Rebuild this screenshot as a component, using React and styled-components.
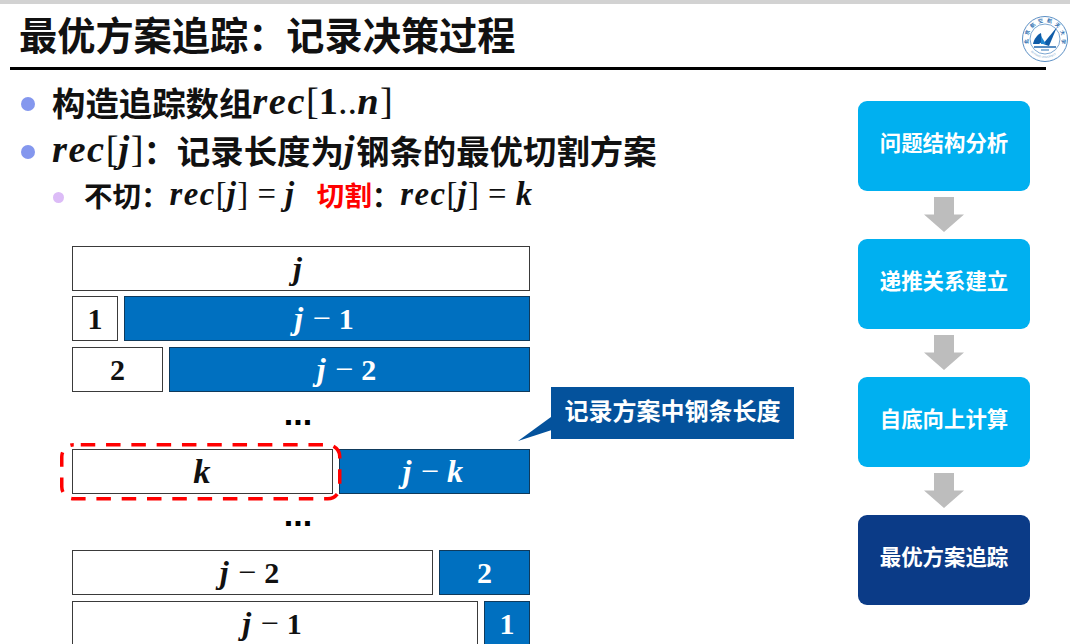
import React from "react";
import styled, { createGlobalStyle } from "styled-components";

const GlobalStyle = createGlobalStyle`
    html, body {
        margin: 0;
        padding: 0;
        background: #ffffff;
    }
    body {
        font-family: "Noto Sans CJK SC", "Liberation Sans", sans-serif;
    }
`;

const Page = styled.div`
    position: relative;
    width: 1070px;
    height: 644px;
    overflow: hidden;
    background: #ffffff;
`;

const TopStrip = styled.div`
    height: 4px;
    background: #d2d2d2;
`;

const Header = styled.div`
    height: 63px;
    padding-left: 19px;
    padding-bottom: 4px;
    box-sizing: border-box;
    display: flex;
    align-items: center;
    font-size: 38.2px;
    font-weight: 700;
    color: #111111;
`;

const Rule = styled.div`
    height: 3px;
    width: 1036px;
    margin-left: 10px;
    background: #000000;
`;

const Main = styled.div`
    display: flex;
    height: 574px;
`;

const LeftColumn = styled.div`
    width: 858px;
    flex: none;
`;

const BulletList = styled.div`
    height: 176px;
    padding-left: 21px;
    box-sizing: border-box;
    padding-top: 7px;
`;

const Line = styled.div`
    display: flex;
    align-items: center;
    height: ${(p) => (p.$sub ? "42px" : "48px")};
    margin-left: ${(p) => (p.$sub ? "32px" : "0")};
    font-size: ${(p) => (p.$sub ? "28.5px" : "33.4px")};
    font-weight: 700;
    color: #111111;
    white-space: pre;
`;

const Dot = styled.span`
    flex: none;
    width: ${(p) => (p.$sub ? "11px" : "14px")};
    height: ${(p) => (p.$sub ? "11px" : "14px")};
    margin-top: 6px;
    margin-right: ${(p) => (p.$sub ? "20px" : "17px")};
    border-radius: 50%;
    background: ${(p) => (p.$sub ? "#dcbcf7" : "#8497ee")};
`;

const Red = styled.span`
    color: #ff0000;
    margin-left: 21px;
    font-size: 27.5px;
`;

const M = styled.span`
    font-family: "Liberation Serif", "DejaVu Serif", serif;
    font-style: italic;
    font-weight: 700;
    font-size: 1.15em;
    letter-spacing: ${(p) => (p.$wide ? "0.045em" : "0.04em")};
`;

const Upright = styled.span`
    font-family: "Liberation Serif", "DejaVu Serif", serif;
    font-weight: ${(p) => (p.$light ? 400 : 700)};
    font-size: 1.15em;
`;

const Equals = styled.span`
    font-family: "Liberation Serif", "DejaVu Serif", serif;
    font-weight: 400;
    font-size: 1.15em;
    padding: 0 1px;
`;

const Bars = styled.div`
    position: relative;
    width: 458px;
    margin-left: 72px;
`;

const BarRow = styled.div`
    display: flex;
    gap: 6px;
    height: 45px;
    margin-bottom: ${(p) => p.$gap || 6}px;
`;

const Bar = styled.div`
    box-sizing: border-box;
    display: flex;
    align-items: center;
    justify-content: center;
    flex: ${(p) => (p.$w ? `0 0 ${p.$w}px` : "1 1 0")};
    border: 1px solid ${(p) => (p.$fill ? "#0f3a5c" : "#3a3a3a")};
    background: ${(p) => (p.$fill ? "#0070c0" : "#ffffff")};
    color: ${(p) => (p.$fill ? "#ffffff" : "#111111")};
    font-family: "Liberation Serif", "DejaVu Serif", serif;
    font-size: 30px;
    font-weight: 700;
    white-space: pre;
`;

const Expr = styled.span`
    display: flex;
    align-items: center;
    margin-right: ${(p) => p.$shift ?? 6}px;
    font-size: 28px;
`;

const Digit = styled.span`
    font-size: 30px;
`;

const Dots = styled.div`
    height: 51px;
    padding-right: 6px;
    box-sizing: border-box;
    text-align: center;
    font-family: "Liberation Sans", sans-serif;
    font-size: 34px;
    font-weight: 700;
    line-height: 30px;
    color: #000000;
`;

const HighlightBox = styled.svg`
    position: absolute;
    left: -12px;
    top: 197px;
    width: 282px;
    height: 58px;
`;

const Highlight = () => (
    <HighlightBox viewBox="0 0 282 58">
        <rect
            x="1.75"
            y="1.75"
            width="278"
            height="54"
            rx="12"
            fill="none"
            stroke="#ff0000"
            strokeWidth="3.5"
            strokeDasharray="14.5 10.8"
            strokeDashoffset="18.3"
        />
    </HighlightBox>
);

const Callout = styled.div`
    position: absolute;
    left: 551px;
    top: 387px;
    width: 243px;
    height: 52px;
    padding-bottom: 8px;
    box-sizing: border-box;
    display: flex;
    align-items: center;
    justify-content: center;
    background: #04529c;
    color: #ffffff;
    font-size: 24px;
    font-weight: 700;
    &::before {
        content: "";
        position: absolute;
        left: -33px;
        top: 30px;
        width: 33px;
        height: 24px;
        background: #04529c;
        clip-path: polygon(100% 0, 100% 55%, 0 100%);
    }
`;

const FlowColumn = styled.div`
    width: 172px;
    flex: none;
    padding-top: 31px;
    display: flex;
    flex-direction: column;
    align-items: center;
`;

const FlowBox = styled.div`
    width: 172px;
    height: 90px;
    flex: none;
    padding-bottom: 10px;
    box-sizing: border-box;
    display: flex;
    align-items: center;
    justify-content: center;
    border-radius: 9px;
    background: ${(p) => (p.$dark ? "#0b3b87" : "#00b0f0")};
    color: #ffffff;
    font-size: 21.4px;
    font-weight: 700;
`;

const FlowArrow = styled.div`
    width: 40px;
    height: 35px;
    margin: 6px 0 7px;
    background: #bdbdbd;
    clip-path: polygon(25% 0, 75% 0, 75% 50%, 100% 50%, 50% 100%, 0 50%, 25% 50%);
`;

const LogoWrap = styled.div`
    position: absolute;
    left: 1021px;
    top: 15px;
    width: 48px;
    height: 48px;
`;

const RING = "北京航空航天大学".split("");

const Logo = () => (
    <LogoWrap>
        <svg width="48" height="48" viewBox="0 0 48 48">
            <defs>
                <path id="logoRingLow" d="M6 30a19 19 0 0 0 36 0" />
            </defs>
            <circle cx="24" cy="24" r="22.5" fill="#fff" stroke="#5b8fc4" strokeWidth="1" />
            <circle cx="24" cy="24" r="15" fill="#fff" stroke="#5b8fc4" strokeWidth="0.8" />
            {RING.map((ch, i) => (
                <text
                    key={i}
                    x="24"
                    y="7.2"
                    fontSize="5"
                    fontWeight="700"
                    fill="#2c6fb0"
                    textAnchor="middle"
                    transform={`rotate(${-98 + i * 28} 24 24)`}
                >
                    {ch}
                </text>
            ))}
            <text fontSize="2.6" fill="#6a9ccb" fontFamily="Liberation Sans">
                <textPath href="#logoRingLow" startOffset="16%">BEIHANG UNIVERSITY</textPath>
            </text>
            <path d="M12 29c1-5 4-9 8-11l1 9-3 2z" fill="#0f5ca8" />
            <path d="M22 29l14-17-8 19z" fill="#0f5ca8" />
            <path d="M20 21l5 8h-5z" fill="#1f86d0" />
            <path d="M13 32h22" stroke="#0f5ca8" strokeWidth="1.4" />
            <path d="M20 35h8" stroke="#6a9ccb" strokeWidth="1.4" />
        </svg>
    </LogoWrap>
);

const FLOW = ["问题结构分析", "递推关系建立", "自底向上计算"];

const Minus = () => <Upright $light> − </Upright>;

export default function App() {
    return (
        <Page>
            <GlobalStyle />
            <TopStrip />
            <Header>最优方案追踪：记录决策过程</Header>
            <Rule />
            <Logo />
            <Main>
                <LeftColumn>
                    <BulletList>
                        <Line>
                            <Dot />
                            构造追踪数组<M>rec</M><Upright $light>[</Upright><Upright>1</Upright><Upright $light>..</Upright><M>n</M><Upright $light>]</Upright>
                        </Line>
                        <Line>
                            <Dot />
                            <M>rec</M><Upright $light>[</Upright><M>j</M><Upright $light>]</Upright>：记录长度为<M>j</M>钢条的最优切割方案
                        </Line>
                        <Line $sub>
                            <Dot $sub />
                            不切：<M $wide>rec</M><Upright $light>[</Upright><M $wide>j</M><Upright $light>]</Upright><Equals> = </Equals><M $wide>j</M>
                            <Red>切割</Red>：<M $wide>rec</M><Upright $light>[</Upright><M $wide>j</M><Upright $light>]</Upright><Equals> = </Equals><M $wide>k</M>
                        </Line>
                    </BulletList>
                    <Bars>
                        <BarRow $gap={5}><Bar><Expr><M>j</M></Expr></Bar></BarRow>
                        <BarRow>
                            <Bar $w={46}>1</Bar>
                            <Bar $fill><Expr><M>j</M><Minus /><Digit>1</Digit></Expr></Bar>
                        </BarRow>
                        <BarRow>
                            <Bar $w={91}>2</Bar>
                            <Bar $fill><Expr><M>j</M><Minus /><Digit>2</Digit></Expr></Bar>
                        </BarRow>
                        <Dots>...</Dots>
                        <BarRow $gap={5}>
                            <Bar $w={261}><M>k</M></Bar>
                            <Bar $fill><Expr $shift={2}><M>j</M><Minus /><M>k</M></Expr></Bar>
                        </BarRow>
                        <Dots>...</Dots>
                        <BarRow>
                            <Bar><Expr><M>j</M><Minus /><Digit>2</Digit></Expr></Bar>
                            <Bar $w={91} $fill>2</Bar>
                        </BarRow>
                        <BarRow>
                            <Bar><Expr><M>j</M><Minus /><Digit>1</Digit></Expr></Bar>
                            <Bar $w={46} $fill>1</Bar>
                        </BarRow>
                        <Highlight />
                    </Bars>
                </LeftColumn>
                <FlowColumn>
                    {FLOW.map((label) => (
                        <React.Fragment key={label}>
                            <FlowBox>{label}</FlowBox>
                            <FlowArrow />
                        </React.Fragment>
                    ))}
                    <FlowBox $dark>最优方案追踪</FlowBox>
                </FlowColumn>
            </Main>
            <Callout>记录方案中钢条长度</Callout>
        </Page>
    );
}
